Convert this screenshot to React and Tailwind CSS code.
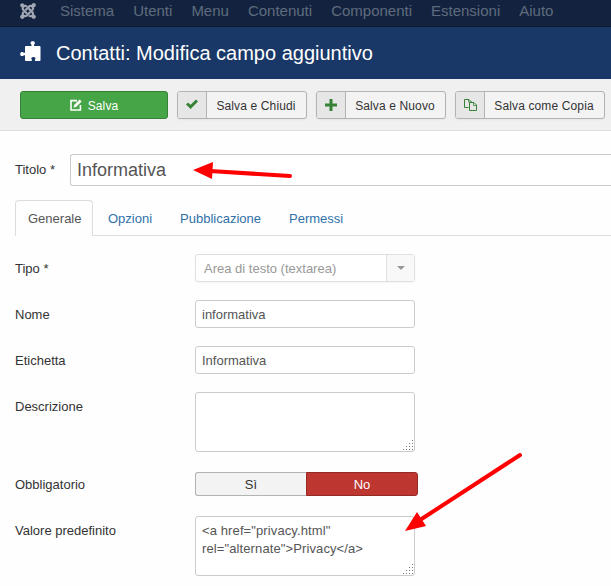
import React, { useState } from 'react';
import { FaJoomla } from 'react-icons/fa';

const menuItems = ['Sistema', 'Utenti', 'Menu', 'Contenuti', 'Componenti', 'Estensioni', 'Aiuto'];
const tabs = ['Generale', 'Opzioni', 'Pubblicazione', 'Permessi'];

const PuzzleIcon = () => (
  <svg className="-mt-1" width="21" height="21" viewBox="0 0 21 21" fill="#fff">
    <path d="M5.800 5h5.700V3.800C10.200 3 9.800 .3 12.700 .3s2.600 2.700 1.300 3.500V5h5.600q.9 0 .9.900v13.200q0 .9-.9.900h-4.600v-1.500c1-.8.600-2.600-1.600-2.600s-2.600 1.800-1.600 2.600V20H5.900q-.9 0-.9-.9V14.200H3.800C3 15.500.2 15.700.2 13s2.800-2.500 3.600-1.200H5V5.900Q5 5 5.800 5z" />
  </svg>
);

const EditIcon = () => (
  <svg width="12" height="12" viewBox="0 0 12 12" fill="none">
    <path d="M7 1.600H1v9.400h9.400V6" stroke="#fff" strokeWidth="1.600" />
    <path d="M3.500 8.500l.6-2.600L9.600.4l2 2L6.100 7.900z" fill="#fff" />
  </svg>
);

const CheckIcon = () => (
  <svg className="-mt-0.5" width="12" height="10" viewBox="0 0 12 10" fill="none">
    <path d="M1 4.500l3.600 3.400L11 1.500" stroke="#378137" strokeWidth="2.900" />
  </svg>
);

const PlusIcon = () => (
  <svg width="12" height="12" viewBox="0 0 12 12" fill="#378137">
    <path d="M4.500 0h3v4.500H12v3H7.500V12h-3V7.500H0v-3h4.500z" />
  </svg>
);

const CopyIcon = () => (
  <svg width="13" height="12" viewBox="0 0 13 12" fill="none" stroke="#378137">
    <path d="M4.500 8.500h-4v-8h4.500l2.500 2.500" />
    <path d="M4.500 .5v2.500h3" strokeWidth=".8" />
    <path d="M5.500 3.500h4.500l2.500 2.500v5.500h-7z" fill="#e6e6e6" />
    <path d="M9.500 3.500v3h3" strokeWidth=".8" />
  </svg>
);

// Corner grip of the textareas
const gripDots = [[9, 0], [6, 3], [9, 3], [3, 6], [6, 6], [9, 6], [0, 9], [3, 9], [6, 9], [9, 9]];

const ResizeGrip = () => (
  <svg className="absolute right-[2px] bottom-[2px]" width="10" height="10" shapeRendering="crispEdges">
    {gripDots.map(([x, y]) => (
      <rect key={`${x}-${y}`} x={x} y={y} width="1" height="1" fill="#777" />
    ))}
  </svg>
);

const ToolbarButton = ({ icon, label, className }) => (
  <button className={`flex h-7 shrink-0 rounded-[3px] border border-[#b3b3b3] bg-[#f3f3f3] text-xs tracking-[0.13px] text-[#333] shadow-[0_1px_2px_rgba(0,0,0,0.05)] ${className}`}>
    <span className="flex h-full w-[29px] items-center justify-center rounded-l-[2px] border-r border-[#b3b3b3] bg-[#e6e6e6]">{icon}</span>
    <span className="flex h-full flex-1 items-center justify-center pt-0.5 pr-px">{label}</span>
  </button>
);

const Field = ({ label, className = '', children }) => (
  <div className={`flex ${className}`}>
    <label className="w-[180px] shrink-0 pt-1.5 leading-[18px] text-[#333]">{label}</label>
    {children}
  </div>
);

const TextArea = ({ value }) => (
  <div className="relative h-[60px] w-[220px]">
    <textarea
      defaultValue={value}
      spellCheck={false}
      className="block h-full w-full resize-none overflow-hidden rounded-[3px] border border-[#ccc] bg-white px-1.5 py-[5px] leading-[18px] tracking-[0.11px] text-[#555] outline-none"
    />
    <ResizeGrip />
  </div>
);

const inputClass = 'h-7 w-[220px] rounded-[3px] border border-[#ccc] bg-white px-1.5 pt-px text-[#555] outline-none';

export default function App() {
  const [activeTab, setActiveTab] = useState('Generale');
  const [required, setRequired] = useState(false);

  return (
    <div className="relative h-[586px] w-full overflow-hidden bg-[#fefefe] font-['Liberation_Sans',Arial,sans-serif] text-[13px] text-[#333]">
      <nav className="flex h-[27px] items-start border-b border-[#0c192e] bg-[#13233f] pl-[19px] text-[15px] leading-[22px] text-[#5f6b7d]">
        <FaJoomla className="mt-0.5 mr-[23px] h-[18px] w-[18px] shrink-0 text-[#a1a7b2]" />
        <div className="flex gap-[19px]">
          {menuItems.map((item) => (
            <a key={item} href="#">{item}</a>
          ))}
        </div>
      </nav>

      <header className="flex h-[52px] items-center bg-[#1a3867] pl-5 text-white">
        <PuzzleIcon />
        <h1 className="ml-[15px] text-xl">Contatti: Modifica campo aggiuntivo</h1>
      </header>

      <div className="flex h-[52px] items-start border-b border-[#dedede] bg-[#f0f0f0] pt-3 pl-5">
        <button className="mr-[9px] flex h-7 w-[148px] shrink-0 items-center justify-center gap-1.5 rounded-[3px] border border-[#378137] bg-[#46a546] text-xs tracking-[0.13px] text-white">
          <EditIcon />
          <span className="pt-0.5">Salva</span>
        </button>
        <ToolbarButton icon={<CheckIcon />} label="Salva e Chiudi" className="mr-[9px] w-[130px]" />
        <ToolbarButton icon={<PlusIcon />} label="Salva e Nuovo" className="mr-[9px] w-[130px]" />
        <ToolbarButton icon={<CopyIcon />} label="Salva come Copia" className="w-[150px]" />
      </div>

      <main className="pl-[15px]">
        <div className="flex pt-[23px]">
          <label className="w-[55px] shrink-0 pt-[7px] leading-[18px]">Titolo *</label>
          <input
            defaultValue="Informativa"
            spellCheck={false}
            className="h-8 min-w-0 flex-1 rounded-l-[3px] border border-r-0 border-[#ccc] bg-white px-1.5 text-lg text-[#555] outline-none"
          />
        </div>

        <div className="mt-3.5 flex h-9 border-b border-[#ddd]">
          {tabs.map((tab) => (
            <button
              key={tab}
              onClick={() => setActiveTab(tab)}
              className={
                tab === activeTab
                  ? 'mr-[1.5px] h-9 rounded-t border border-b-0 border-[#ddd] bg-[#fefefe] pr-[11px] pl-3 text-[#555]'
                  : 'mr-0.5 h-9 border border-b-0 border-transparent px-3 text-[#3071a9]'
              }
            >
              {tab}
            </button>
          ))}
        </div>

        <Field label="Tipo *" className="mt-[18px]">
          <div className="flex h-7 w-[220px] rounded-[3px] border border-[#e0e0e0] bg-white text-[#999] shadow-[0_1px_2px_rgba(0,0,0,0.04)]">
            <span className="flex-1 pt-px pl-2 leading-[26px]">Area di testo (textarea)</span>
            <span className="flex w-[28px] items-center justify-center rounded-r-[2px] border-l border-[#e0e0e0] bg-[#f8f8f8]">
              <svg width="8" height="4" viewBox="0 0 8 4" fill="#999">
                <path d="M0 0h8L4 4z" />
              </svg>
            </span>
          </div>
        </Field>

        <Field label="Nome" className="mt-[18px]">
          <input defaultValue="informativa" spellCheck={false} className={inputClass} />
        </Field>

        <Field label="Etichetta" className="mt-[18px]">
          <input defaultValue="Informativa" spellCheck={false} className={inputClass} />
        </Field>

        <Field label="Descrizione" className="mt-[18px]">
          <TextArea value="" />
        </Field>

        <Field label="Obbligatorio" className="mt-[18px] h-7">
          <div className="mt-0.5 flex h-6">
            <button
              onClick={() => setRequired(true)}
              className={`w-[111px] rounded-l-[3px] border border-r-0 pt-px ${required ? 'border-[#378137] bg-[#46a546] text-white' : 'border-[#b3b3b3] bg-[#f3f3f3] text-[#333]'}`}
            >
              Sì
            </button>
            <button
              onClick={() => setRequired(false)}
              className={`w-28 rounded-r-[3px] border pt-px ${required ? 'border-[#b3b3b3] bg-[#f3f3f3] text-[#333]' : 'border-[#942a25] bg-[#bd362f] text-white'}`}
            >
              No
            </button>
          </div>
        </Field>

        <Field label="Valore predefinito" className="mt-[18px]">
          <TextArea value={'<a href="privacy.html"\nrel="alternate">Privacy</a>'} />
        </Field>
      </main>

      {/* Red pointers over the title and the default value */}
      <svg className="pointer-events-none absolute top-0 left-0" width="611" height="586" fill="#f00" stroke="#f00">
        <path d="M210 171L290 176" strokeWidth="4" strokeLinecap="round" />
        <path d="M193 170L213 162L212 179z" stroke="none" />
        <path d="M420 520L520 455" strokeWidth="4" strokeLinecap="round" />
        <path d="M405 531L417 512L426 526z" stroke="none" />
      </svg>
    </div>
  );
}
